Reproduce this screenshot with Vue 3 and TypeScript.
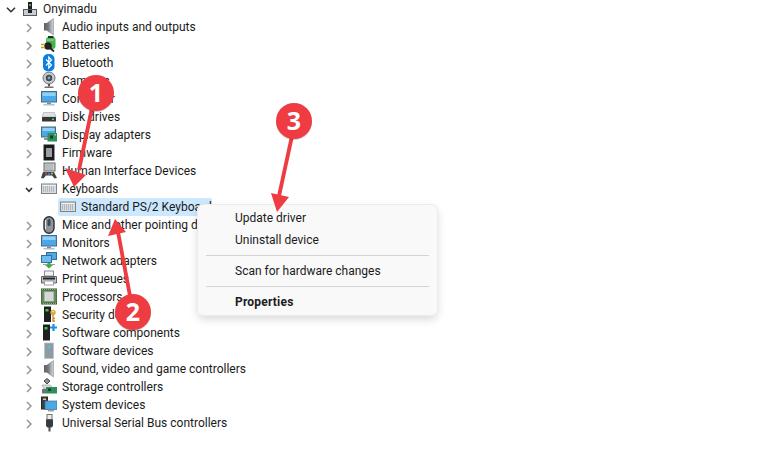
<script setup lang="ts">
const speaker = `<defs><linearGradient id="sp" x1="0" x2="1"><stop offset="0" stop-color="#5a5f63"/><stop offset=".55" stop-color="#a4a9ad"/><stop offset="1" stop-color="#d2d5d8"/></linearGradient></defs><rect x="3" y="5" width="3.500" height="7.500" fill="#62666a"/><path d="M6 5 12.500 0.500V17L6 12.500Z" fill="url(#sp)" stroke="#8d9296" stroke-width=".6"/>`
const monitor = `<rect x=".5" y="1.500" width="15" height="10.500" fill="#4aa8e6" stroke="#4f6a80"/><rect x="1.500" y="2.500" width="13" height="3.500" fill="#8fd0f7"/><rect x="6" y="12.500" width="4" height="1.500" fill="#7f8a92"/><rect x="2.500" y="14" width="11" height="1.500" fill="#a9c3d6"/>`
const keyboard = `<rect x=".5" y="4" width="15" height="9.500" fill="#d9dcde" stroke="#7d8286"/><rect x="1.500" y="5" width="13" height="1" fill="#f0f1f2"/><path d="M2 7h12M2 9h12M2 11h12" stroke="#8d9296" stroke-width="1" stroke-dasharray="1 1"/>`
const tower = `<rect x="3.500" y="1" width="9" height="15.500" fill="#8f9ba3" stroke="#b8c1c7" stroke-width=".7"/><rect x="6.500" y="4" width="3" height="2" fill="#4fc3d9"/>`

const icons: Record<string, string> = {
  root: `<rect x="5" y="0" width="4" height="8" fill="#1d1f20"/><rect x="6" y="2" width="2" height="2" fill="#43b649"/><rect x=".5" y="7.500" width="13" height="6" fill="#c9cdd0" stroke="#55595c"/><rect x="5" y="8" width="4" height="3" fill="#1d1f20"/>`,
  audio: speaker,
  battery: `<rect x="5" y="1" width="9.500" height="12" rx="3" fill="#45b24c"/><rect x="7" y="0" width="5.500" height="2" fill="#2b2e30"/><path d="M6 4h7" stroke="#a8e0aa"/><circle cx="7" cy="10" r="3.800" fill="#222"/><path d="M0 8.500h4M0 11.500h4" stroke="#c9a227" stroke-width="1.300"/><path d="M9 12l4 3.500" stroke="#222" stroke-width="1.800"/>`,
  bluetooth: `<rect x="2" y="0" width="11.500" height="17.500" rx="5" fill="#0a7ee3"/><path d="M5 5.500 10.500 11 7.800 14V3L10.500 6 5 11.500" fill="none" stroke="#fff" stroke-width="1.200"/>`,
  camera: `<circle cx="8" cy="6" r="6" fill="#c7c9ca" stroke="#6f7376"/><circle cx="8" cy="6" r="3.200" fill="#3f4a54"/><circle cx="8" cy="6" r="1.400" fill="#7fa5c4"/><rect x="7" y="12" width="2" height="2.500" fill="#55595c"/><rect x="3.500" y="14.500" width="9" height="1.500" fill="#6f7376"/>`,
  monitor,
  disk: `<path d="M2.500 4.500h11L15 9H1Z" fill="#dfe2e4" stroke="#a3a7aa" stroke-width=".6"/><rect x="1" y="9" width="14" height="4.500" rx=".6" fill="#33373a"/><rect x="11" y="10.500" width="2" height="1.500" fill="#5fd35f"/>`,
  display: `<rect x=".5" y="1" width="14" height="10" fill="#4aa8e6" stroke="#4f6a80"/><rect x="1.500" y="2" width="12" height="3" fill="#8fd0f7"/><rect x="3" y="12" width="6" height="2" fill="#8b949b"/><rect x="6.500" y="7" width="9.500" height="8.500" fill="#2f8f5b"/><rect x="9" y="9.500" width="3" height="3" fill="#173f2b"/><rect x="13.500" y="8" width="1.500" height="1.500" fill="#d9c24a"/>`,
  chip: `<rect x="2.500" y="0.500" width="11" height="16" fill="#1b1c1d"/><path d="M2 2h1M2 4.500h1M2 7h1M2 9.500h1M2 12h1M2 14.500h1M13 2h1M13 4.500h1M13 7h1M13 9.500h1M13 12h1M13 14.500h1" stroke="#9a9ea1"/><rect x="5" y="4" width="6" height="9" fill="#9aa0a4"/>`,
  hid: `<rect x="3" y="1" width="11" height="8" fill="#cfd3d6" stroke="#62676b"/><path d="M4.500 3h8M4.500 5h8M4.500 7h8" stroke="#6f7478" stroke-dasharray="1 1"/><path d="M0 16 2 10h11L16 16l-2.500 .5L11 13.500H5L2.500 16.500Z" fill="#3f4549"/><circle cx="5" cy="11.500" r="1" fill="#e04b4b"/><circle cx="8" cy="12" r="1.100" fill="#3d86d6"/><circle cx="11" cy="11.500" r="1" fill="#e0b84b"/>`,
  keyboard,
  mouse: `<rect x="3" y="0.800" width="10" height="16.500" rx="5" fill="#8d969c" stroke="#2b3035" stroke-width="1.400"/><rect x="6.500" y="3" width="3" height="7" rx="1.500" fill="#3f4850"/><path d="M4.500 4v9" stroke="#e4e8eb"/>`,
  network: `<rect x="5.500" y="0.500" width="10" height="7" fill="#4aa8e6" stroke="#3c6d96"/><rect x=".5" y="3.500" width="10" height="7" fill="#6dbcf0" stroke="#3c6d96"/><path d="M2 12.500h12" stroke="#98a0a6" stroke-width="1"/><path d="M6.500 11h3v2H12L8 16.500 4 13h2.500Z" fill="#3fae49"/>`,
  printer: `<rect x="3.500" y="1" width="9" height="5" fill="#f3f3f3" stroke="#8a8e91"/><path d="M0.500 6.500h15V13h-15Z" fill="#bfc3c6" stroke="#5d6164"/><rect x="2" y="7.500" width="12" height="2" fill="#24282a"/><rect x="3.500" y="11" width="9" height="4" fill="#fff" stroke="#9a9ea1"/>`,
  cpu: `<rect x=".5" y="1" width="15" height="15" fill="#3f8159" stroke="#2a5c3f"/><rect x="3" y="3.500" width="10" height="10" fill="#d5d8d6" stroke="#8f9692"/><rect x="1" y="1.500" width="14" height="14" fill="none" stroke="#c2a64d" stroke-dasharray="1 1"/>`,
  security: `<rect x="3" y="0.500" width="7" height="15.500" fill="#1d1f20"/><rect x="4.500" y="3" width="3" height="2.500" fill="#48c04f"/><circle cx="12" cy="6.500" r="2.700" fill="#d8a738"/><circle cx="12" cy="5.700" r=".8" fill="#fff"/><path d="M12 9v7M12 12.500h2M12 15h2" stroke="#c7922b" stroke-width="1.400"/>`,
  softcomp: `<rect x="2" y="0.500" width="7" height="16" fill="#1d1f20"/><rect x="3.500" y="3" width="3" height="2.500" fill="#48c04f"/><path d="M12.500 0v7M9 3.500h7" stroke="#1b8fe0" stroke-width="2.200"/>`,
  softdev: tower,
  storage: `<path d="M1 7 9 7l4 4H3Z" fill="#d9dcde" stroke="#8c9093" stroke-width=".6"/><path d="M6 0.500 9 3 6 6 3 3Z" fill="#8d9296" stroke="#45494c"/><rect x="5" y="9" width="11" height="6.500" fill="#2f8f5b"/><rect x="7" y="10.500" width="3" height="2.500" fill="#173f2b"/><path d="M1 11h4v4.500H1Z" fill="#6f7376"/>`,
  system: `<rect x="0.500" y="1" width="6" height="12" fill="#3a3f43" stroke="#24282a"/><rect x="2" y="2.500" width="3" height="1.500" fill="#e4c65a"/><rect x="4" y="5" width="12" height="8.500" fill="#4aa8e6" stroke="#4f6a80" stroke-width=".7"/><rect x="7" y="14" width="6" height="1.500" fill="#9aa1a7"/>`,
  usb: `<rect x="6" y="0.500" width="5" height="5" fill="#eceded" stroke="#6f7376"/><path d="M5 5.500h7V12l-1.500 1.500h-4L5 12Z" fill="#383c3f"/><rect x="7.500" y="13" width="2" height="4.500" fill="#4d5154"/>`,
}

const before = [
  ['Audio inputs and outputs', 'audio'],
  ['Batteries', 'battery'],
  ['Bluetooth', 'bluetooth'],
  ['Cameras', 'camera'],
  ['Computer', 'monitor'],
  ['Disk drives', 'disk'],
  ['Display adapters', 'display'],
  ['Firmware', 'chip'],
  ['Human Interface Devices', 'hid'],
]
const after = [
  ['Mice and other pointing devices', 'mouse'],
  ['Monitors', 'monitor'],
  ['Network adapters', 'network'],
  ['Print queues', 'printer'],
  ['Processors', 'cpu'],
  ['Security devices', 'security'],
  ['Software components', 'softcomp'],
  ['Software devices', 'softdev'],
  ['Sound, video and game controllers', 'audio'],
  ['Storage controllers', 'storage'],
  ['System devices', 'system'],
  ['Universal Serial Bus controllers', 'usb'],
]
const badges = [
  { n: '1', cx: 96, cy: 93, shaft: '92 108 79 170', head: '65 168 86 175 74 187' },
  { n: '2', cx: 133, cy: 312, shaft: '130 296 118 232', head: '108 236 126 232 115 219' },
  { n: '3', cx: 294, cy: 121, shaft: '292 136 279 196', head: '271 193 289 197 277 212' },
]
</script>

<template>
  <div class="page">
    <div class="tree">
      <div class="row root">
        <span class="chev">
          <svg width="10" height="6" viewBox="0 0 10 6"><path d="M1 .8 5 4.800 9 .8" class="open" /></svg>
        </span>
        <svg class="root-icon" width="14" height="14" viewBox="0 0 14 14" v-html="icons.root"></svg>
        <span class="label">Onyimadu</span>
      </div>
      <div v-for="[label, icon] in before" :key="label" class="row child">
        <span class="chev">
          <svg width="6" height="10" viewBox="0 0 6 10"><path d="M1 1 5 5 1 9" class="shut" /></svg>
        </span>
        <svg class="icon" width="16" height="18" viewBox="0 0 16 18" v-html="icons[icon]"></svg>
        <span class="label">{{ label }}</span>
      </div>
      <div class="row child">
        <span class="chev">
          <svg width="8" height="6" viewBox="0 0 8 6"><path d="M1 1 4 4.300 7 1" class="open" /></svg>
        </span>
        <svg class="icon" width="16" height="18" viewBox="0 0 16 18" v-html="icons.keyboard"></svg>
        <span class="label">Keyboards</span>
      </div>
      <div class="row selected">
        <svg class="icon" width="16" height="18" viewBox="0 0 16 18" v-html="icons.keyboard"></svg>
        <span class="label">Standard PS/2 Keyboard</span>
      </div>
      <div v-for="[label, icon] in after" :key="label" class="row child">
        <span class="chev">
          <svg width="6" height="10" viewBox="0 0 6 10"><path d="M1 1 5 5 1 9" class="shut" /></svg>
        </span>
        <svg class="icon" width="16" height="18" viewBox="0 0 16 18" v-html="icons[icon]"></svg>
        <span class="label">{{ label }}</span>
      </div>
    </div>

    <div class="menu">
      <div class="item">Update driver</div>
      <div class="item">Uninstall device</div>
      <div class="sep"></div>
      <div class="item">Scan for hardware changes</div>
      <div class="sep"></div>
      <div class="item strong">Properties</div>
    </div>

    <svg class="marks" width="775" height="461" viewBox="0 0 775 461">
      <g v-for="b in badges" :key="b.n">
        <polyline :points="b.shaft" fill="none" stroke="#ef3b42" stroke-width="3.800" />
        <polygon :points="b.head" fill="#ef3b42" />
        <circle :cx="b.cx" :cy="b.cy + 1" r="18" fill="#000" opacity=".18" />
        <circle :cx="b.cx" :cy="b.cy" r="18" fill="#ef3b42" />
        <text :x="b.cx" :y="b.cy + 9" class="num" text-anchor="middle">{{ b.n }}</text>
      </g>
    </svg>
  </div>
</template>

<style scoped>
.page {
  position: relative;
  width: 775px;
  height: 461px;
  overflow: hidden;
  background: #fff;
  font-family: Roboto, "Noto Sans", sans-serif;
  font-size: 12px;
  color: #1a1a1a;
}
.tree {
  display: flex;
  flex-direction: column;
}
.row {
  display: flex;
  align-items: center;
  height: 18px;
  white-space: nowrap;
}
.root {
  height: 17px;
  margin-bottom: 1px;
  padding-left: 6px;
}
.child {
  padding-left: 24px;
}
.chev {
  display: flex;
  align-items: center;
  justify-content: center;
  width: 10px;
  height: 100%;
  padding-top: 2px;
  box-sizing: border-box;
}
.shut {
  fill: none;
  stroke: #959595;
  stroke-width: 1.500;
}
.open {
  fill: none;
  stroke: #2e2e2e;
  stroke-width: 1.500;
}
.root-icon {
  margin-left: 7px;
  margin-right: 6px;
}
.icon {
  flex: none;
  margin-left: 7px;
  margin-right: 5px;
}
.selected {
  margin-left: 58px;
  width: 154px;
  padding-left: 2px;
  box-sizing: border-box;
  background: #cce8ff;
  border-radius: 2px;
  overflow: hidden;
}
.selected .icon {
  margin-left: 0;
}
.menu {
  position: absolute;
  left: 198px;
  top: 205px;
  width: 239px;
  height: 110px;
  box-sizing: border-box;
  padding: 2px 8px;
  background: #f9f9f9;
  border-radius: 5px;
  box-shadow: 0 0 0 1px #ececec, 0 4px 10px rgba(0, 0, 0, 0.16);
  color: #1b1b1b;
}
.item {
  height: 22px;
  line-height: 22px;
  padding-left: 29px;
}
.strong {
  font-weight: 700;
  letter-spacing: 0.2px;
}
.sep {
  height: 1px;
  margin: 4px 0;
  background: #d4d4d4;
}
.marks {
  position: absolute;
  left: 0;
  top: 0;
  pointer-events: none;
}
.num {
  fill: #fff;
  font-family: "Open Sans", sans-serif;
  font-size: 25px;
  font-weight: 700;
}
</style>
